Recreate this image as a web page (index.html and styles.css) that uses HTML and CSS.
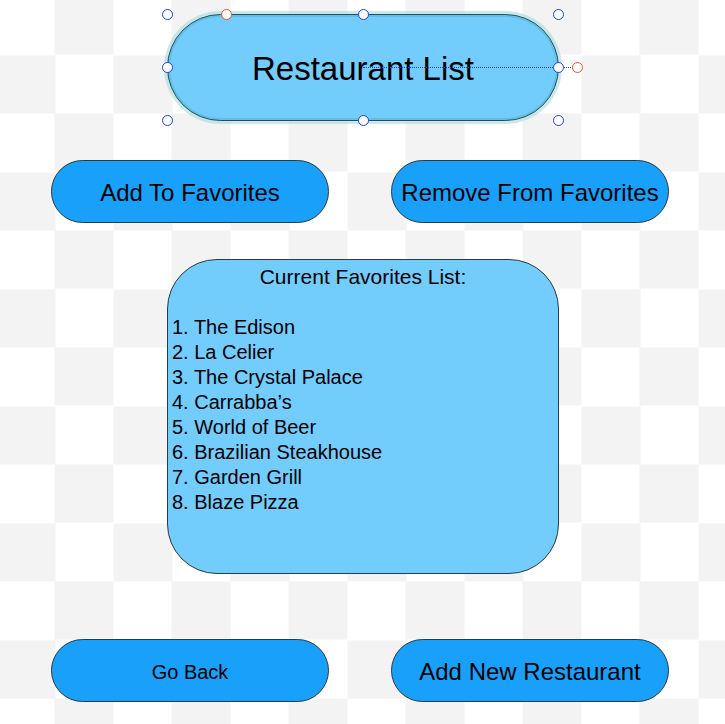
FILE: index.html
```html
<!DOCTYPE html>
<html>
<head>
<meta charset="utf-8">
<link rel="stylesheet" href="styles.css">
</head>
<body>
<div class="canvas">
  <div class="title-wrap">
    <div class="title-pill">Restaurant List</div>
    <div class="guide"></div>
    <span class="handle h-tl"></span>
    <span class="handle h-tc"></span>
    <span class="handle h-tr"></span>
    <span class="handle h-ml"></span>
    <span class="handle h-mr"></span>
    <span class="handle h-bl"></span>
    <span class="handle h-bc"></span>
    <span class="handle h-br"></span>
    <span class="handle red h-radius"></span>
    <span class="handle red h-rotate"></span>
  </div>

  <div class="btn-row top-row">
    <div class="btn">Add To Favorites</div>
    <div class="btn">Remove From Favorites</div>
  </div>

  <div class="fav-box">
    <div class="fav-head">Current Favorites List:</div>
    <ol class="fav-list">
      <li>1. The Edison</li>
      <li>2. La Celier</li>
      <li>3. The Crystal Palace</li>
      <li>4. Carrabba’s</li>
      <li>5. World of Beer</li>
      <li>6. Brazilian Steakhouse</li>
      <li>7. Garden Grill</li>
      <li>8. Blaze Pizza</li>
    </ol>
  </div>

  <div class="btn-row bottom-row">
    <div class="btn small">Go Back</div>
    <div class="btn">Add New Restaurant</div>
  </div>
</div>
</body>
</html>
```
FILE: styles.css
```css
html, body {
  margin: 0;
  padding: 0;
}
body {
  width: 725px;
  height: 724px;
  overflow: hidden;
  font-family: "Liberation Sans", Arial, sans-serif;
  color: #000;
  background-color: #ffffff;
  background-image: conic-gradient(#f3f3f3 25%, transparent 0 50%, #f3f3f3 0 75%, transparent 0);
  background-size: 117px 117px;
  background-position: -3.5px -3.5px;
}
.canvas {
  display: flex;
  flex-direction: column;
  align-items: flex-start;
  height: 724px;
}
.title-wrap {
  position: relative;
  margin: 14px 0 0 167px;
  width: 392px;
  height: 107px;
}
.title-pill {
  box-sizing: border-box;
  width: 392px;
  height: 107px;
  border-radius: 54px;
  background: #72cdfd;
  border: 1px solid #2f4b55;
  box-shadow: 0 0 0 3px rgba(160, 215, 216, 0.55), inset 0 0 0 2px rgba(70, 175, 205, 0.45);
  display: flex;
  align-items: center;
  justify-content: center;
  font-size: 33px;
  padding-top: 3px;
}
.guide {
  position: absolute;
  left: 196px;
  top: 53px;
  width: 214px;
  border-top: 1px dotted #1a3dff;
}
.handle {
  position: absolute;
  box-sizing: border-box;
  width: 11px;
  height: 11px;
  margin: -5.5px 0 0 -5.5px;
  border-radius: 50%;
  border: 1.5px solid #1a3dff;
  background: #fff;
}
.handle.red { border-color: #f0502a; }
.h-tl { left: 0; top: 0; }
.h-tc { left: 196px; top: 0; }
.h-tr { left: 391px; top: 0; }
.h-ml { left: 0; top: 53px; }
.h-mr { left: 391px; top: 53px; }
.h-bl { left: 0; top: 106px; }
.h-bc { left: 196px; top: 106px; }
.h-br { left: 391px; top: 106px; }
.h-radius { left: 59px; top: 0; }
.h-rotate { left: 410px; top: 53px; }

.btn-row {
  display: flex;
  gap: 62px;
  padding-left: 51px;
}
.top-row { margin-top: 39px; }
.bottom-row { margin-top: 65px; }
.btn {
  box-sizing: border-box;
  width: 278px;
  height: 63px;
  border-radius: 32px;
  background: #18a0fb;
  border: 1px solid #2e3a40;
  display: flex;
  align-items: center;
  justify-content: center;
  font-size: 24px;
  white-space: nowrap;
  padding-top: 3px;
}
.btn.small { font-size: 20px; }

.fav-box {
  box-sizing: border-box;
  margin: 36px 0 0 167px;
  width: 392px;
  height: 315px;
  border-radius: 50px;
  background: #72cdfd;
  border: 1px solid #2e3a40;
  padding: 4px 0 0 4px;
  font-size: 20px;
  line-height: 25px;
}
.fav-head {
  text-align: center;
  font-size: 21px;
  margin-bottom: 26px;
  padding-right: 4px;
}
.fav-list {
  list-style: none;
  margin: 0;
  padding: 0;
}
```
